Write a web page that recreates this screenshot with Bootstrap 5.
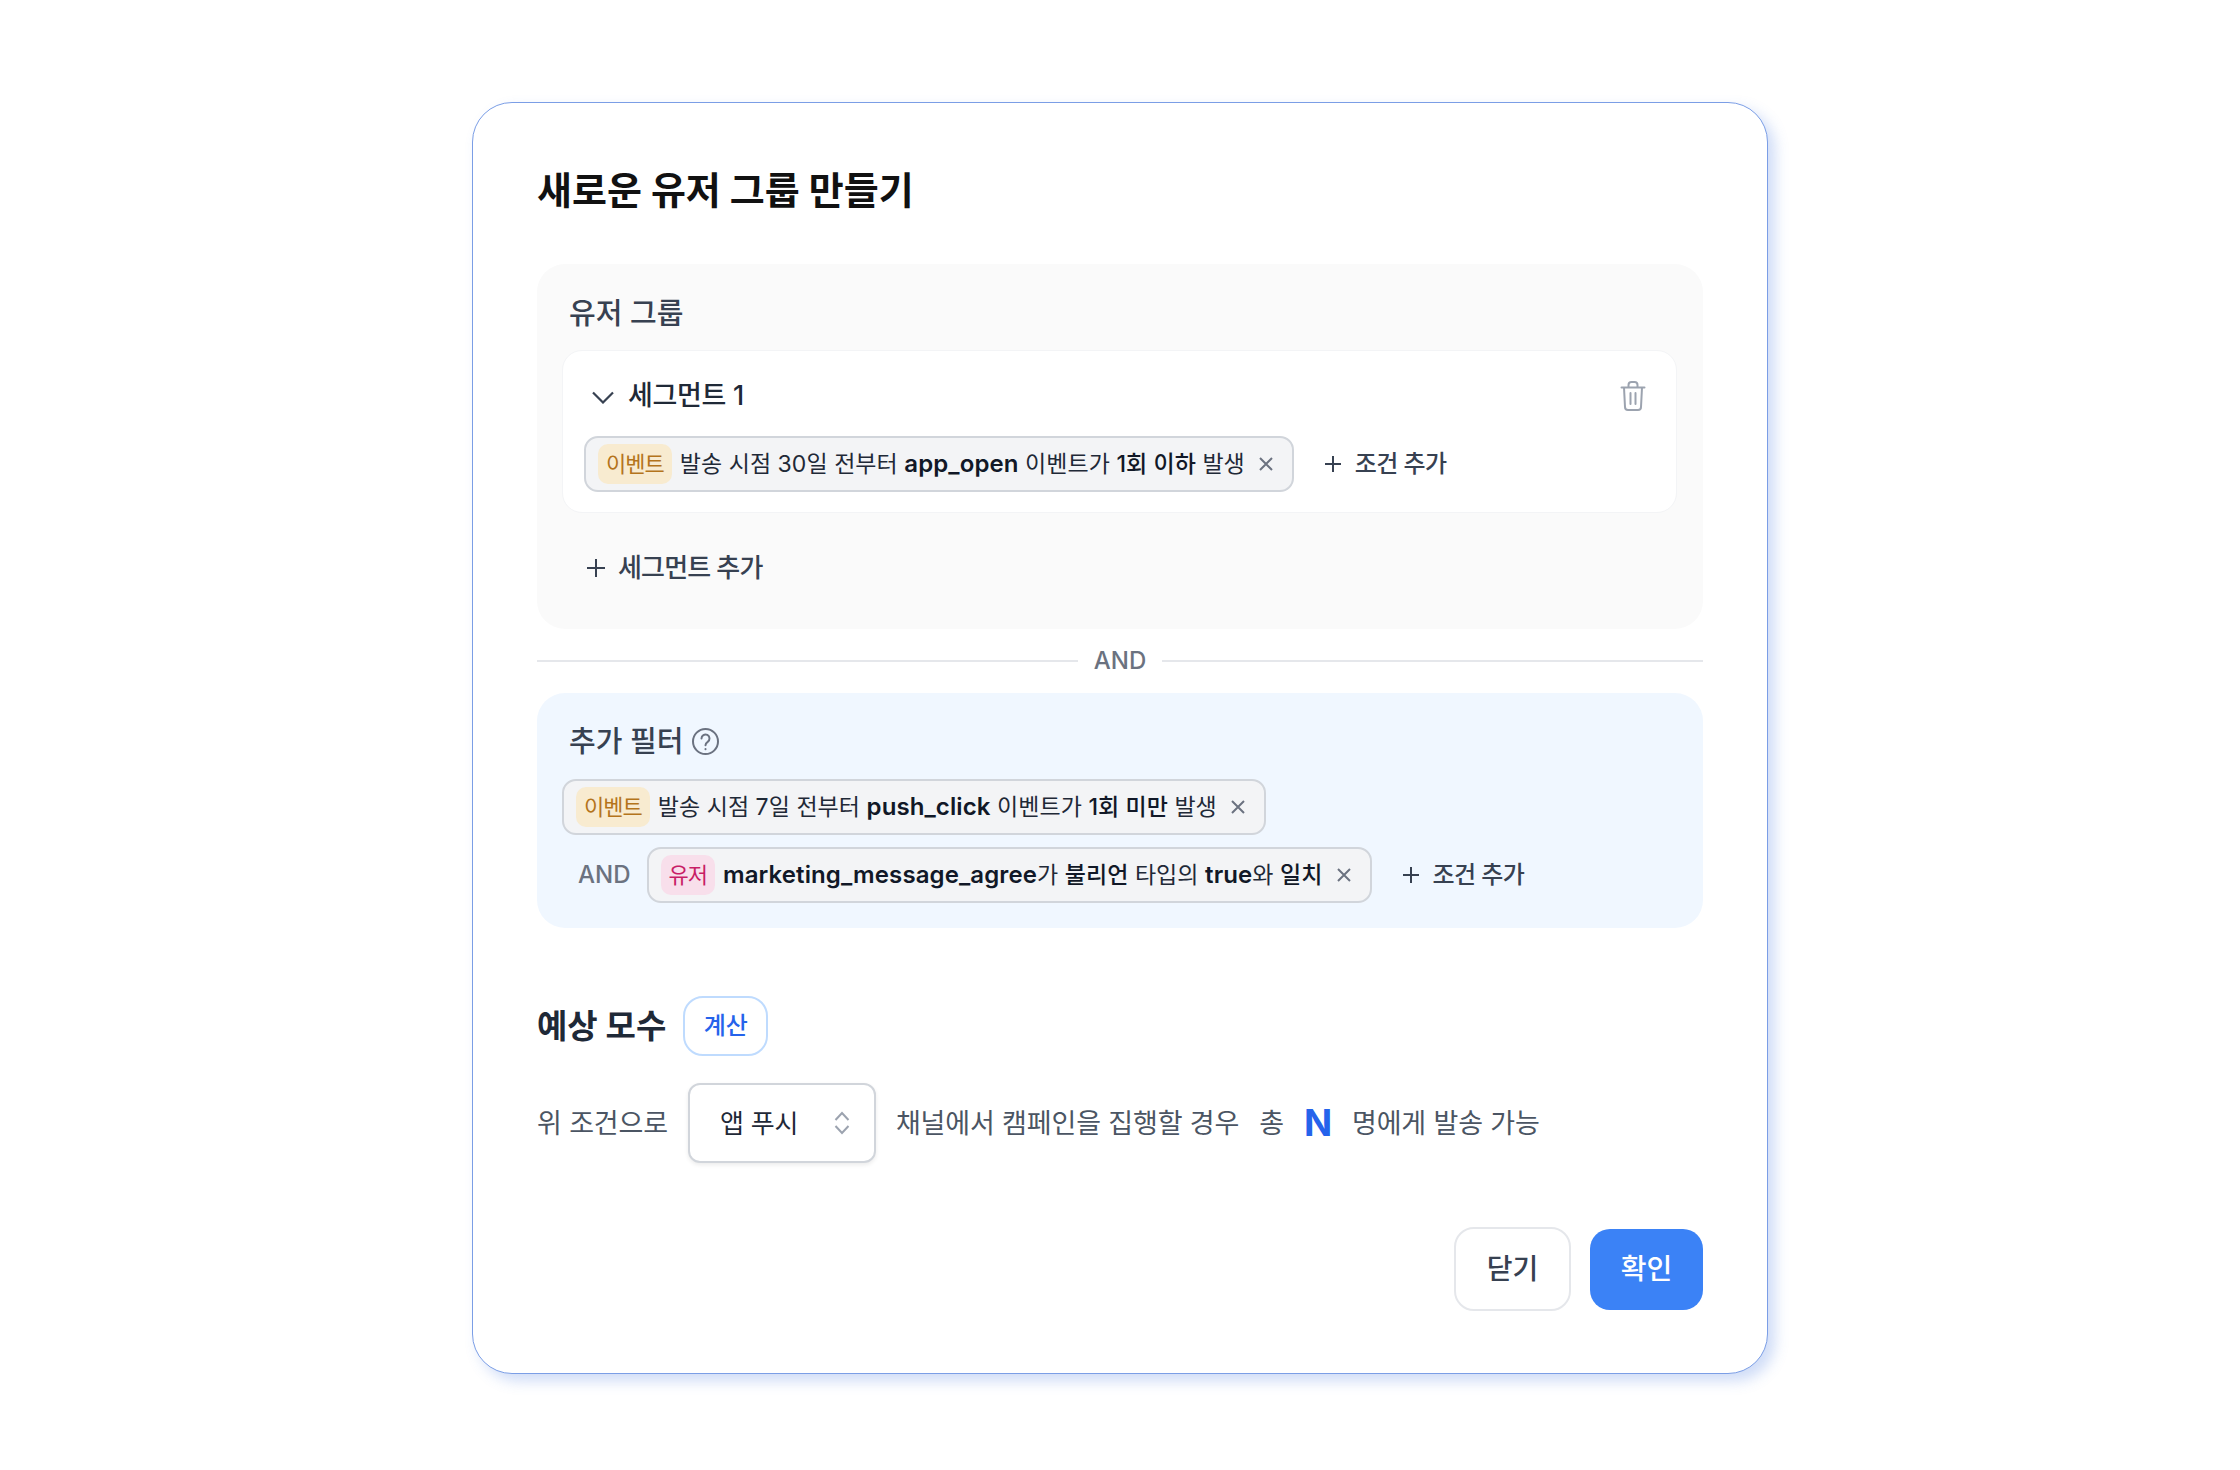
<!doctype html>
<html lang="ko">
<head>
<meta charset="utf-8">
<title>새로운 유저 그룹 만들기</title>
<link href="https://cdn.jsdelivr.net/npm/bootstrap@5.3.0/dist/css/bootstrap.min.css" rel="stylesheet">
<style>
html,body{min-height:100%}
body{background:#fff;font-family:Inter,"Noto Sans CJK KR",sans-serif;padding:102px 0 96px;color:#374151}
.ug-panel{width:1296px;height:1272px;margin:0 auto;background:#fff;border:1px solid #7b9ee6;border-radius:40px;padding:62px 64px;box-shadow:7px 7px 14px rgba(70,120,225,.26)}
.ug-title{font-size:38px;line-height:50px;font-weight:700;color:#111;margin:0 0 49px;letter-spacing:0}
.ug-gray{background:#fafafa;border-radius:28px;padding:30px 26px 41px 25px}
.ug-blue{background:#f0f7ff;border-radius:28px;padding:29px 26px 25px 25px}
.ug-label{font-size:29px;line-height:40px;font-weight:500;color:#374151;margin-left:7px}
.ug-seg{background:#fff;border:1px solid #f3f4f6;border-radius:20px;padding:25px 21px 20px;margin-top:16px}
.ug-seghead{height:40px;margin-bottom:20px}
.ug-chev{margin:2px 14px 0 8px}
.ug-trash{margin-right:9px}
.ug-segname{font-size:27px;line-height:40px;font-weight:500;color:#1f2937;letter-spacing:-.3px}
.ug-chip{height:56px;background:#f3f4f6;border:2px solid #d1d5db;border-radius:14px;padding:0 18px 0 12px;font-size:23px;letter-spacing:.05px;color:#1f2937;white-space:nowrap}
.ug-chip b{font-weight:500;color:#111827}
.ug-chip b.ug-lat{font-size:24px;font-weight:600;letter-spacing:.1px}
.ug-x{margin-left:13px}
.ug-tag{height:40px;border-radius:10px;padding:0 8px;font-size:22px;letter-spacing:-1px;line-height:40px;margin-right:8px}
.ug-tag-ev{background:#f8ebd0;color:#b4741c}
.ug-tag-us{background:#f8dfeb;color:#c81e66}
.ug-add{font-size:24px;line-height:40px;font-weight:500;letter-spacing:-.6px;color:#374151;background:none;border:0;padding:0}
.ug-addcond{margin-left:30px}
.ug-plus{margin-right:5px}
.ug-addseg{font-size:26px;letter-spacing:-.85px;margin:35px 0 0 24px}
.ug-and{font-size:24px;color:#6b7280;font-weight:500}
.ug-divider{height:36px;margin:14px 0 14px}
.ug-line{height:2px;background:#e5e7eb;flex:1 1 0}
.ug-help{margin-left:1px;position:relative;top:-1px}
.ug-stack{margin-top:17px;gap:12px}
.ug-est{margin-top:68px;height:59px;gap:17px}
.ug-esttitle{font-size:33px;font-weight:700;color:#1f2937;padding-top:2px}
.ug-calc{width:85px;height:60px;border:2px solid #bfdbfe;border-radius:20px;background:#fff;color:#2563eb;font-size:24px;font-weight:500;padding:0}
.ug-sendrow{margin-top:28px;font-size:27px;letter-spacing:-.15px;color:#4b5563;white-space:nowrap;gap:20px}
.ug-sendrow>span{padding-top:2px}
.ug-select{width:188px;height:80px;border:2px solid #d1d5db;border-radius:12px;padding:0 24px 0 30px;background:#fff;box-shadow:0 2px 4px rgba(0,0,0,.08);color:#1f2937;font-size:26px}
.ug-sendrow>.ug-n{font-size:37px;font-weight:700;color:#2563eb;line-height:1;padding-top:0;margin-top:-1px}
.ug-actions{margin-top:64px;gap:19px}
.ug-close,.ug-ok{font-size:28px;font-weight:500;padding:0;border-radius:20px}
.ug-close{width:117px;height:84px;background:#fff;border:2px solid #e5e7eb;color:#374151}
.ug-ok{width:113px;height:81px;background:#3b82f6;border:0;color:#fff}
.ug-ok:hover{background:#3b82f6;color:#fff}
</style>
</head>
<body>
<div class="ug-panel">
  <h1 class="ug-title">새로운 유저 그룹 만들기</h1>

  <section class="ug-gray">
    <div class="ug-label">유저 그룹</div>
    <div class="ug-seg">
      <div class="ug-seghead d-flex align-items-center justify-content-between">
        <div class="d-flex align-items-center">
          <svg class="ug-chev" width="22" height="13" viewBox="0 0 22 13" fill="none" stroke="#374151" stroke-width="2.2"><path d="M1 1.5l10 10 10-10"/></svg>
          <span class="ug-segname">세그먼트 1</span>
        </div>
        <svg class="ug-trash" width="26" height="30" viewBox="0 0 26 30" fill="none" stroke="#9ca3af" stroke-width="2" stroke-linecap="round" stroke-linejoin="round"><path d="M1.5 6.5h23M8.5 6.5V4a3 3 0 0 1 3-3h3a3 3 0 0 1 3 3v2.5M4 6.500l1 19.500a3 3 0 0 0 3 3h10a3 3 0 0 0 3-3l1-19.500M10.500 12v11M15.500 12v11"/></svg>
      </div>
      <div class="d-flex align-items-center">
        <div class="ug-chip d-inline-flex align-items-center">
          <span class="ug-tag ug-tag-ev">이벤트</span>
          <span>발송 시점 30일 전부터 <b class="ug-lat">app_open</b> 이벤트가 <b>1회 이하</b> 발생</span>
          <svg class="ug-x" width="16" height="16" viewBox="0 0 16 16" fill="none" stroke="#6b7280" stroke-width="2"><path d="M2 2l12 12M14 2L2 14"/></svg>
        </div>
        <button class="ug-add ug-addcond d-inline-flex align-items-center gap-2" type="button">
          <svg class="ug-plus" width="18" height="18" viewBox="0 0 18 18" fill="none" stroke="#374151" stroke-width="2"><path d="M9 1v16M1 9h16"/></svg>조건 추가
        </button>
      </div>
    </div>
    <button class="ug-add ug-addseg d-inline-flex align-items-center gap-2" type="button">
      <svg class="me-1" width="20" height="20" viewBox="0 0 20 20" fill="none" stroke="#374151" stroke-width="2"><path d="M10 1v18M1 10h18"/></svg>세그먼트 추가
    </button>
  </section>

  <div class="ug-divider d-flex align-items-center">
    <div class="ug-line"></div>
    <span class="ug-and mx-3">AND</span>
    <div class="ug-line"></div>
  </div>

  <section class="ug-blue">
    <div class="ug-label d-flex align-items-center gap-2">추가 필터
      <svg class="ug-help" width="27" height="27" viewBox="0 0 27 27" fill="none" stroke="#6b7280" stroke-width="2" stroke-linecap="round"><circle cx="13.500" cy="13.500" r="12.500"/><path d="M9.500 10.500a4 4 0 1 1 6.200 3.300c-1.400 .9-2.200 1.700-2.200 3.400"/><path d="M13.500 21v.2"/></svg>
    </div>
    <div class="ug-stack d-flex flex-column align-items-start">
      <div class="ug-chip d-inline-flex align-items-center">
        <span class="ug-tag ug-tag-ev">이벤트</span>
        <span>발송 시점 7일 전부터 <b class="ug-lat">push_click</b> 이벤트가 <b>1회 미만</b> 발생</span>
        <svg class="ug-x" width="16" height="16" viewBox="0 0 16 16" fill="none" stroke="#6b7280" stroke-width="2"><path d="M2 2l12 12M14 2L2 14"/></svg>
      </div>
      <div class="d-flex align-items-center">
        <span class="ug-and mx-3">AND</span>
        <div class="ug-chip d-inline-flex align-items-center">
          <span class="ug-tag ug-tag-us">유저</span>
          <span><b class="ug-lat">marketing_message_agree</b>가 <b>불리언</b> 타입의 <b class="ug-lat">true</b>와 <b>일치</b></span>
          <svg class="ug-x" width="16" height="16" viewBox="0 0 16 16" fill="none" stroke="#6b7280" stroke-width="2"><path d="M2 2l12 12M14 2L2 14"/></svg>
        </div>
        <button class="ug-add ug-addcond d-inline-flex align-items-center gap-2" type="button">
          <svg class="ug-plus" width="18" height="18" viewBox="0 0 18 18" fill="none" stroke="#374151" stroke-width="2"><path d="M9 1v16M1 9h16"/></svg>조건 추가
        </button>
      </div>
    </div>
  </section>

  <div class="ug-est d-flex align-items-center">
    <span class="ug-esttitle">예상 모수</span>
    <button class="ug-calc" type="button">계산</button>
  </div>

  <div class="ug-sendrow d-flex align-items-center">
    <span>위 조건으로</span>
    <div class="ug-select d-flex align-items-center justify-content-between">
      <span>앱 푸시</span>
      <svg width="16" height="24" viewBox="0 0 16 24" fill="none" stroke="#9ca3af" stroke-width="2"><path d="M1.500 9L8 2l6.500 7M1.500 15L8 22l6.500-7"/></svg>
    </div>
    <span>채널에서 캠페인을 집행할 경우</span>
    <span>총</span>
    <span class="ug-n">N</span>
    <span>명에게 발송 가능</span>
  </div>

  <div class="ug-actions d-flex justify-content-end align-items-center">
    <button class="btn ug-close" type="button">닫기</button>
    <button class="btn ug-ok" type="button">확인</button>
  </div>
</div>
<script src="https://cdn.jsdelivr.net/npm/bootstrap@5.3.0/dist/js/bootstrap.bundle.min.js"></script>
</body>
</html>
